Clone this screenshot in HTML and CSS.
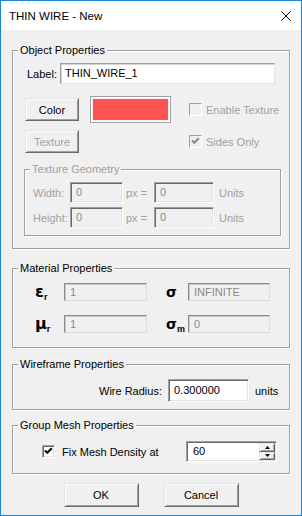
FILE: index.html
```html
<!DOCTYPE html>
<html>
<head>
    <title>THIN WIRE - New</title>
    <link rel="stylesheet" href="styles.css">
</head>
<body>
    <div class="window">
        <div class="titlebar">
            <span class="title">THIN WIRE - New</span>
            <svg class="close" width="10" height="10" viewBox="0 0 10 10">
                <path d="M0.5 0.5 L9.5 9.5 M9.5 0.5 L0.5 9.5" stroke="#000" stroke-width="1" fill="none"/>
            </svg>
        </div>

        <div class="client">
            <fieldset class="group group-object">
                <legend>Object Properties</legend>
                <div class="label-row">
                    <span class="label-text">Label:</span>
                    <div class="edit edit-label">THIN_WIRE_1</div>
                </div>

                <div class="appearance">
                    <div class="button">Color</div>
                    <div class="swatch"><div class="swatch-fill"></div></div>
                    <div class="check disabled"><span class="box"></span>Enable Texture</div>

                    <div class="button disabled">Texture</div>
                    <div></div>
                    <div class="check disabled">
                        <span class="box">
                            <svg width="9" height="9" viewBox="0 0 9 9"><path d="M1 3.5 L3.2 5.8 L7.8 1.2" stroke="#8c8c8c" stroke-width="2" fill="none"/></svg>
                        </span>Sides Only
                    </div>
                </div>

                <fieldset class="group group-texture">
                    <legend>Texture Geometry</legend>
                    <div class="geo-row">
                        <span class="geo-label">Width:</span>
                        <div class="edit edit-sunken edit-off geo-px">0</div>
                        <span class="geo-eq">px =</span>
                        <div class="edit edit-sunken edit-off geo-units">0</div>
                        <span class="geo-unit-text">Units</span>
                    </div>
                    <div class="geo-row geo-row-second">
                        <span class="geo-label">Height:</span>
                        <div class="edit edit-sunken edit-off geo-px">0</div>
                        <span class="geo-eq">px =</span>
                        <div class="edit edit-sunken edit-off geo-units">0</div>
                        <span class="geo-unit-text">Units</span>
                    </div>
                </fieldset>
            </fieldset>

            <fieldset class="group group-material">
                <legend>Material Properties</legend>
                <div class="mat-row">
                    <span class="sym sym-left">&epsilon;<sub>r</sub></span>
                    <div class="edit edit-flat mat-edit-left">1</div>
                    <span class="sym sym-right">&sigma;</span>
                    <div class="edit edit-flat mat-edit-right">INFINITE</div>
                </div>
                <div class="mat-row mat-row-second">
                    <span class="sym sym-left">&mu;<sub>r</sub></span>
                    <div class="edit edit-flat mat-edit-left">1</div>
                    <span class="sym sym-right">&sigma;<sub>m</sub></span>
                    <div class="edit edit-flat mat-edit-right">0</div>
                </div>
            </fieldset>

            <fieldset class="group group-wire">
                <legend>Wireframe Properties</legend>
                <div class="wire-row">
                    <span class="wire-label">Wire Radius:</span>
                    <div class="edit edit-sunken wire-edit">0.300000</div>
                    <span class="wire-units">units</span>
                </div>
            </fieldset>

            <fieldset class="group group-mesh">
                <legend>Group Mesh Properties</legend>
                <div class="mesh-row">
                    <div class="check check-mesh">
                        <span class="box box-on">
                            <svg width="9" height="9" viewBox="0 0 9 9"><path d="M1 3.5 L3.2 5.8 L7.8 1.2" stroke="#000" stroke-width="2" fill="none"/></svg>
                        </span>Fix Mesh Density at
                    </div>
                    <div class="spin">
                        <span class="spin-value">60</span>
                        <div class="spin-btns">
                            <div class="spin-btn">
                                <svg width="5" height="3" viewBox="0 0 5 3"><path d="M2.5 0 L5 3 L0 3 Z" fill="#000"/></svg>
                            </div>
                            <div class="spin-btn">
                                <svg width="5" height="3" viewBox="0 0 5 3"><path d="M0 0 L5 0 L2.5 3 Z" fill="#000"/></svg>
                            </div>
                        </div>
                    </div>
                </div>
            </fieldset>

            <div class="actions">
                <div class="button button-wide">OK</div>
                <div class="button button-wide">Cancel</div>
            </div>
        </div>
    </div>
</body>
</html>
```

FILE: styles.css
```css
* {
    box-sizing: border-box;
}
body {
    margin: 0;
    font-family: "Liberation Sans", Arial, sans-serif;
    font-size: 11px;
    color: #000;
    background: #f0f0f0;
}
.window {
    width: 302px;
    height: 516px;
    border: 1px solid #1883d7;
    background: #f0f0f0;
    display: flex;
    flex-direction: column;
}
.titlebar {
    height: 29px;
    background: #fff;
    display: flex;
    align-items: center;
    justify-content: space-between;
    padding: 0 10px 0 8px;
}
.title {
    font-size: 11.5px;
}
.client {
    padding: 13px 11px 0;
}

/* group boxes */
.group {
    margin: 0;
    padding: 0;
    min-width: 0;
    border: 1px solid #a0a0a0;
    box-shadow: inset 1px 1px #fff, 1px 1px #fff;
}
.group legend {
    margin-left: 5px;
    padding: 0 2px;
    line-height: 14px;
    background: #f0f0f0;
}
.group-object {
    padding-bottom: 12px;
}
.group-material {
    margin-top: 12px;
    padding-bottom: 14px;
}
.group-wire {
    margin-top: 9px;
    padding-bottom: 7px;
}
.group-mesh {
    margin-top: 8px;
    padding-bottom: 11px;
}

/* controls */
.edit {
    height: 21px;
    line-height: 17px;
    padding: 0 4px;
    white-space: nowrap;
    overflow: hidden;
}
.edit-sunken {
    background: #fff;
    border: 1px solid;
    border-color: #a0a0a0 #fff #fff #a0a0a0;
    box-shadow: inset 1px 1px #696969, inset -1px -1px #e3e3e3;
    padding-left: 5px;
    padding-top: 1px;
}
.edit-off {
    background: #f0f0f0;
    color: #8a8a8a;
}
.edit-flat {
    height: 18px;
    line-height: 16px;
    background: #f0f0f0;
    color: #8a8a8a;
    border: 1px solid;
    border-color: #8c8c8c #dcdcdc #dcdcdc #8c8c8c;
    box-shadow: inset 1px 1px #c8c8c8;
    padding-left: 5px;
}
.button {
    height: 23px;
    display: flex;
    align-items: center;
    justify-content: center;
    background: #f0f0f0;
    border: 1px solid;
    border-color: #e3e3e3 #696969 #696969 #e3e3e3;
    box-shadow: inset 1px 1px #fff, inset -1px -1px #a0a0a0;
}
.button.disabled {
    color: #a0a0a0;
}
.button-wide {
    width: 75px;
    height: 24px;
}
.check {
    display: flex;
    align-items: center;
    gap: 4px;
}
.check.disabled {
    color: #a0a0a0;
}
.box {
    width: 13px;
    height: 13px;
    display: flex;
    align-items: center;
    justify-content: center;
    border: 1px solid;
    border-color: #a0a0a0 #fff #fff #a0a0a0;
    background: #f0f0f0;
}
.box-on {
    background: #fff;
    border-color: #a0a0a0 #fff #fff #a0a0a0;
    box-shadow: inset 1px 1px #696969, inset -1px -1px #e3e3e3;
}

/* object properties */
.label-row {
    display: flex;
    align-items: center;
    margin-top: 6px;
    padding-left: 14px;
}
.label-text {
    width: 33px;
}
.edit-label {
    width: 215px;
    background: #fff;
    border: 1px solid;
    border-color: #a0a0a0 #e3e3e3 #e3e3e3 #a0a0a0;
    box-shadow: inset 1px 1px #d4d4d4;
    line-height: 19px;
    padding-left: 4px;
}
.appearance {
    display: grid;
    grid-template-columns: 54px 81px 1fr;
    grid-template-rows: 27px 23px;
    column-gap: 11px;
    row-gap: 7px;
    align-items: center;
    margin-top: 12px;
    padding-left: 12px;
}
.appearance .check {
    margin-left: 7px;
}
.swatch {
    height: 27px;
    padding: 2px;
    border: 1px solid #a0a0a0;
    box-shadow: inset 0 0 0 1px #fff;
}
.swatch-fill {
    height: 100%;
    background: #ff5353;
}
.group-texture {
    margin: 9px 0 0 11px;
    width: 257px;
    padding-bottom: 7px;
    color: #a0a0a0;
}
.geo-row {
    display: flex;
    align-items: center;
    margin-top: 6px;
    padding-left: 8px;
}
.geo-row-second {
    margin-top: 4px;
}
.geo-label {
    width: 37px;
}
.geo-px {
    width: 53px;
}
.geo-eq {
    width: 31px;
    padding-left: 3px;
}
.geo-units {
    width: 60px;
}
.geo-unit-text {
    margin-left: 5px;
}

/* material properties */
.mat-row {
    display: flex;
    align-items: center;
    margin-top: 8px;
    padding-left: 22px;
}
.mat-row-second {
    margin-top: 14px;
}
.sym {
    font-family: "DejaVu Sans", sans-serif;
    font-weight: bold;
    font-size: 16px;
    line-height: 18px;
}
.sym sub {
    font-family: "Liberation Sans", sans-serif;
    font-size: 9px;
    vertical-align: -3px;
    line-height: 0;
}
.sym-left {
    width: 29px;
}
.sym-right {
    width: 22px;
    margin-left: 19px;
    font-size: 14px;
}
.mat-edit-left {
    width: 83px;
}
.mat-edit-right {
    width: 82px;
}

/* wireframe */
.wire-row {
    display: flex;
    align-items: center;
    margin-top: 8px;
    padding-left: 86px;
}
.wire-label {
    width: 69px;
    text-align: right;
    padding-right: 10px;
    white-space: nowrap;
}
.wire-edit {
    width: 81px;
    height: 23px;
    line-height: 19px;
}
.wire-units {
    margin-left: 6px;
}

/* group mesh */
.mesh-row {
    display: flex;
    align-items: center;
    margin-top: 9px;
    padding-left: 29px;
}
.check-mesh {
    width: 144px;
    gap: 7px;
}
.spin {
    width: 91px;
    height: 21px;
    display: flex;
    background: #fff;
    border: 1px solid;
    border-color: #a0a0a0 #fff #fff #a0a0a0;
    box-shadow: inset 1px 1px #696969, inset -1px -1px #e3e3e3;
    padding: 1px;
}
.spin-value {
    flex: 1;
    padding-left: 5px;
    line-height: 17px;
}
.spin-btns {
    width: 16px;
    display: flex;
    flex-direction: column;
}
.spin-btn {
    flex: 1;
    display: flex;
    align-items: center;
    justify-content: center;
    background: #f0f0f0;
    border: 1px solid;
    border-color: #e3e3e3 #696969 #696969 #e3e3e3;
    box-shadow: inset 1px 1px #fff, inset -1px -1px #a0a0a0;
}

.actions {
    display: flex;
    justify-content: center;
    gap: 25px;
    margin-top: 9px;
}
```
